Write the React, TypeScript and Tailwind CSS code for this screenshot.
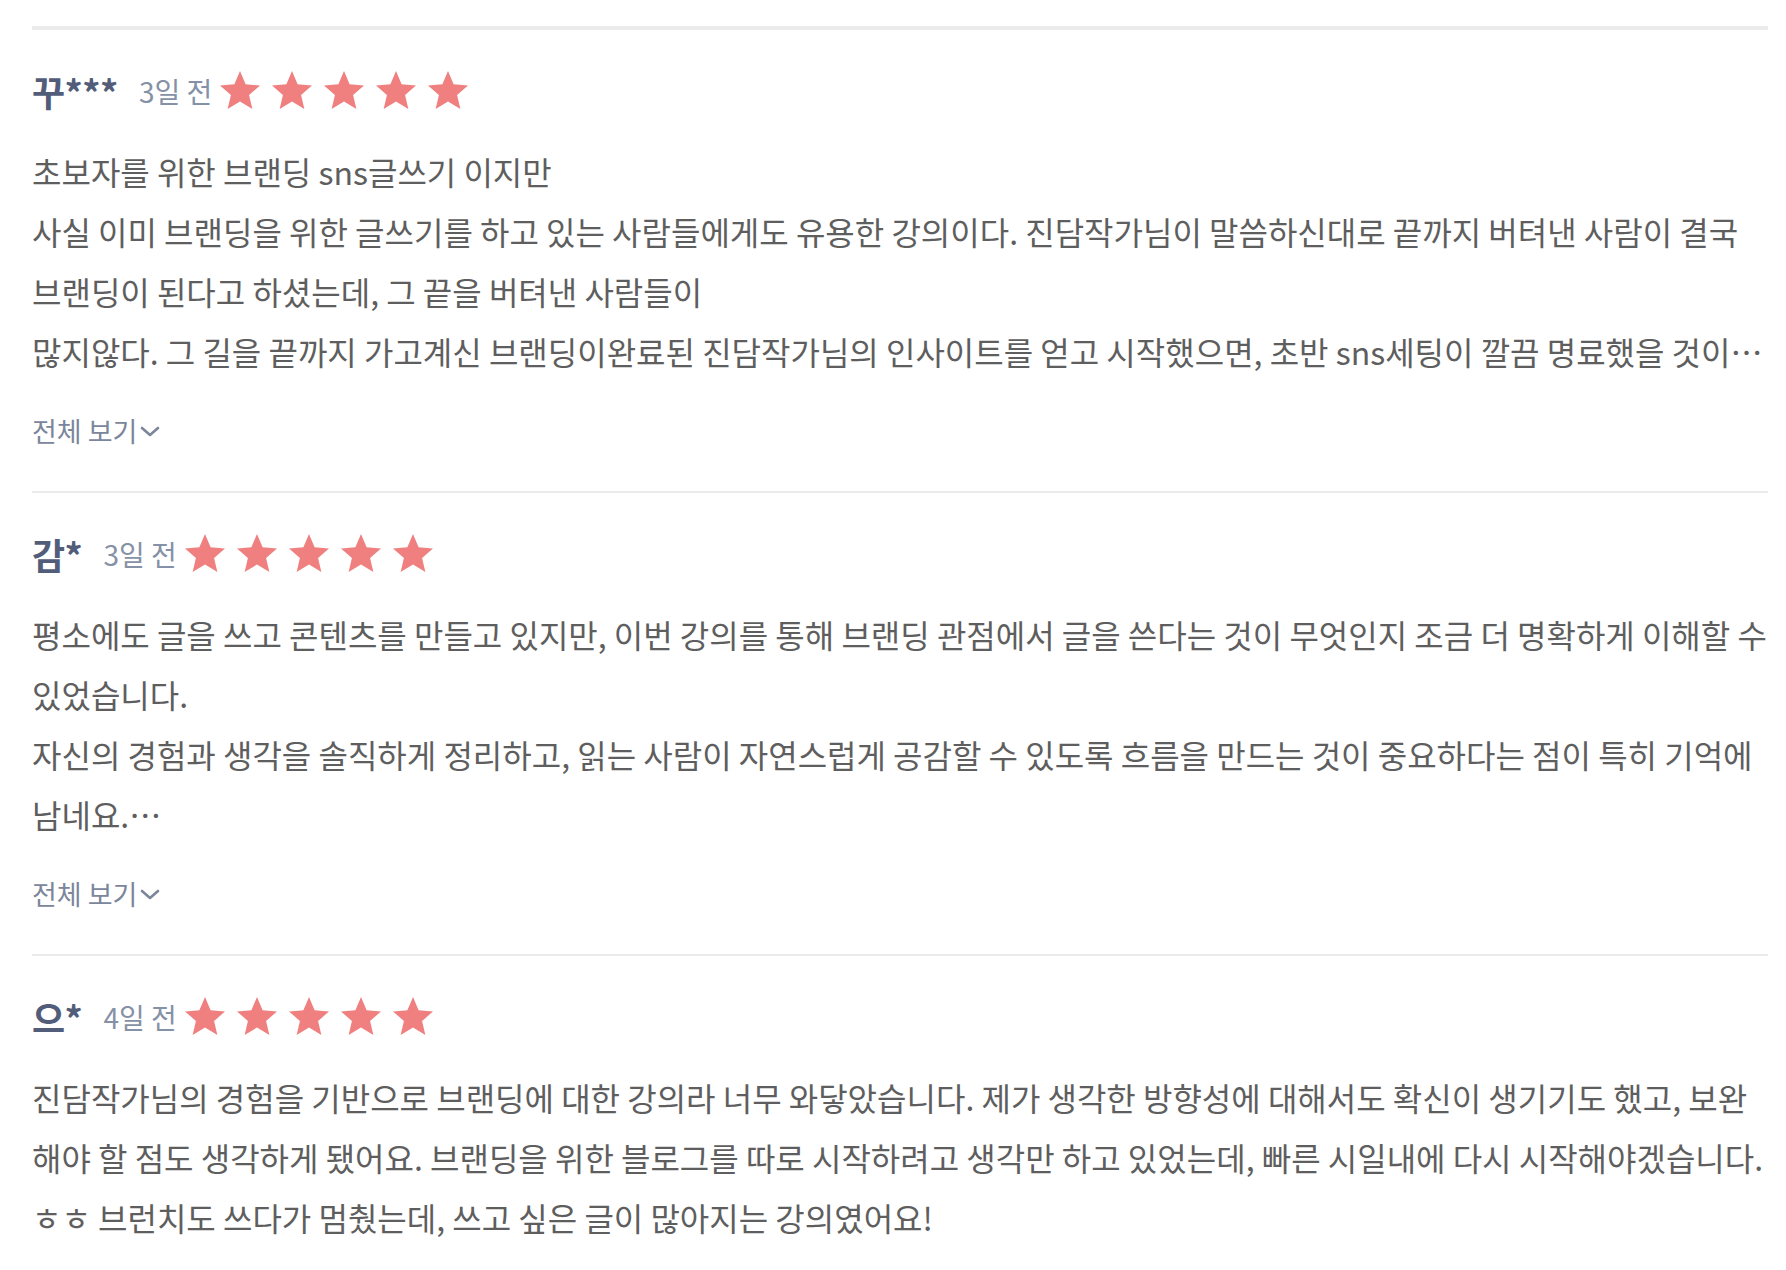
import React from "react";

const Star = () => (
  <svg viewBox="0 0 24 24" className="w-[48px] h-[48px] fill-[#f08080] shrink-0">
    <path d="M12 17.27L18.18 21l-1.64-7.03L22 9.24l-7.19-.61L12 2 9.19 8.63 2 9.24l5.46 4.73L5.82 21z" />
  </svg>
);

type ReviewProps = {
  name: string;
  date: string;
  lines: string[];
  more?: boolean;
  thick?: boolean;
};

const Review = ({ name, date, lines, more, thick }: ReviewProps) => (
  <div
    className={
      thick
        ? "border-t-4 border-[#ebebeb] pt-[37px] pb-[40px]"
        : "border-t-2 border-[#ebebeb] pt-[37px] pb-[40px]"
    }
  >
    <div className="flex items-center h-[48px]">
      <span className="text-[36px] font-bold text-[#525d7a] tracking-[-0.5px] leading-none">{name}</span>
      <span className="ml-[21px] text-[28px] text-[#8591a6] leading-none">{date}</span>
      <div className="ml-[4px] flex gap-[4px]">
        <Star />
        <Star />
        <Star />
        <Star />
        <Star />
      </div>
    </div>
    <div className="mt-[26px] text-[32px] leading-[60px] text-[#5e5e5e]">
      {lines.map((l, i) => (
        <div key={i} className="whitespace-nowrap">
          {l}
        </div>
      ))}
    </div>
    {more && (
      <div className="mt-[30px] h-[40px] flex items-center text-[27px] text-[#7b869b]">
        <span>전체 보기</span>
        <svg viewBox="0 0 22 14" className="ml-[2px] w-[22px] h-[14px]" fill="none" stroke="#7b869b" strokeWidth="2.6" strokeLinecap="round" strokeLinejoin="round">
          <polyline points="3,4 11,11 19,4" />
        </svg>
      </div>
    )}
  </div>
);

export default function App() {
  return (
    <div className="w-[1786px] min-h-[1270px] bg-white pt-[26px] pl-[32px] pr-[18px] font-['Noto_Sans_CJK_KR','Noto_Sans',sans-serif]">
      <Review
        thick
        name="꾸***"
        date="3일 전"
        more
        lines={[
          "초보자를 위한 브랜딩 sns글쓰기 이지만",
          "사실 이미 브랜딩을 위한 글쓰기를 하고 있는 사람들에게도 유용한 강의이다. 진담작가님이 말씀하신대로 끝까지 버텨낸 사람이 결국",
          "브랜딩이 된다고 하셨는데, 그 끝을 버텨낸 사람들이",
          "많지않다. 그 길을 끝까지 가고계신 브랜딩이완료된 진담작가님의 인사이트를 얻고 시작했으면, 초반 sns세팅이 깔끔 명료했을 것이…",
        ]}
      />
      <Review
        name="감*"
        date="3일 전"
        more
        lines={[
          "평소에도 글을 쓰고 콘텐츠를 만들고 있지만, 이번 강의를 통해 브랜딩 관점에서 글을 쓴다는 것이 무엇인지 조금 더 명확하게 이해할 수",
          "있었습니다.",
          "자신의 경험과 생각을 솔직하게 정리하고, 읽는 사람이 자연스럽게 공감할 수 있도록 흐름을 만드는 것이 중요하다는 점이 특히 기억에",
          "남네요.…",
        ]}
      />
      <Review
        name="으*"
        date="4일 전"
        lines={[
          "진담작가님의 경험을 기반으로 브랜딩에 대한 강의라 너무 와닿았습니다. 제가 생각한 방향성에 대해서도 확신이 생기기도 했고, 보완",
          "해야 할 점도 생각하게 됐어요. 브랜딩을 위한 블로그를 따로 시작하려고 생각만 하고 있었는데, 빠른 시일내에 다시 시작해야겠습니다.",
          "ㅎㅎ 브런치도 쓰다가 멈췄는데, 쓰고 싶은 글이 많아지는 강의였어요!",
        ]}
      />
    </div>
  );
}
